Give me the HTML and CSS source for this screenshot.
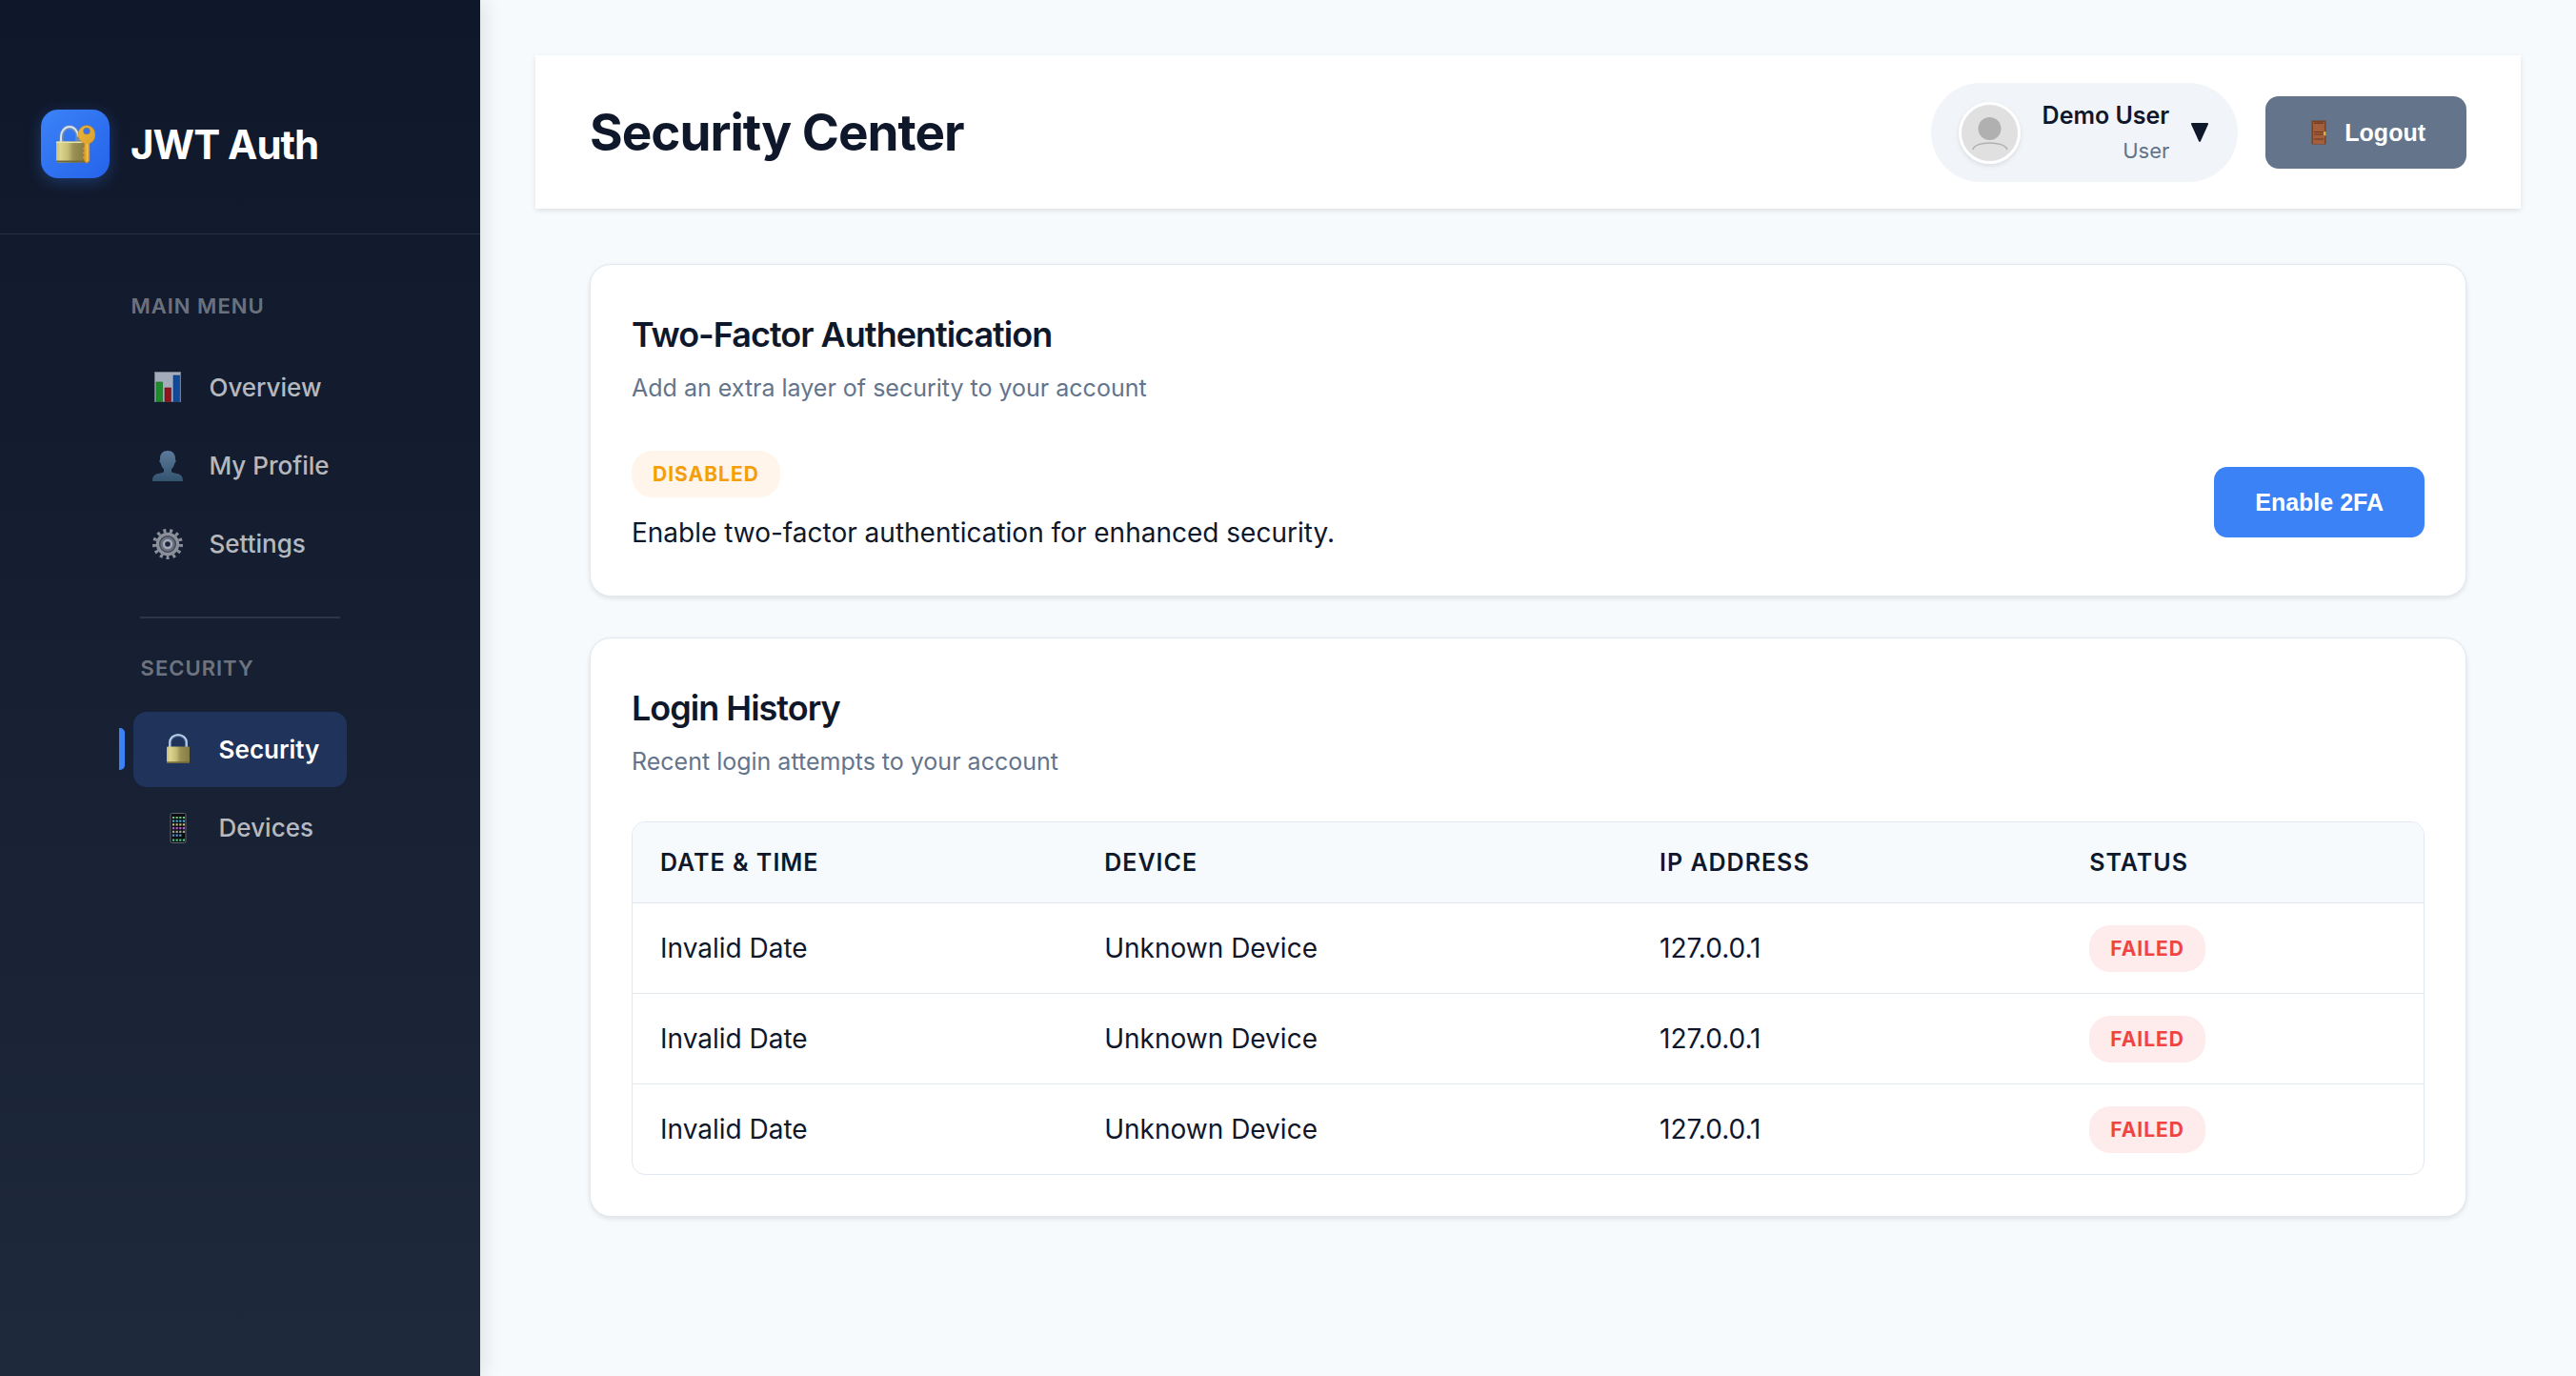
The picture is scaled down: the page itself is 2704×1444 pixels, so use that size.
FILE: index.html
```html
<!DOCTYPE html>
<html lang="en">
<head>
<meta charset="utf-8">
<meta name="viewport" content="width=device-width, initial-scale=1">
<title>Security Center</title>
<link rel="stylesheet" href="styles.css">
</head>
<body>
<div class="app">
  <aside class="sidebar">
    <div class="brand">
      <span class="brand-mark">
        <svg viewBox="0 0 42 42" width="42" height="42" aria-hidden="true">
          <defs>
            <linearGradient id="brass" x1="0" x2="1" y1="0" y2="0">
              <stop offset="0" stop-color="#c9c07a"/><stop offset=".15" stop-color="#ddd58f"/>
              <stop offset=".42" stop-color="#c4bb76"/><stop offset=".6" stop-color="#9a9155"/><stop offset="1" stop-color="#857b45"/>
            </linearGradient>
            <linearGradient id="gold" x1="0" x2="1" y1="0" y2="1">
              <stop offset="0" stop-color="#e8b53c"/><stop offset="1" stop-color="#d9992a"/>
            </linearGradient>
          </defs>
          <path d="M6.500 20V13.500a8.500 10 0 0 1 17 0V20" fill="none" stroke="#6d8bb0" stroke-width="4.500"/>
          <path d="M6 20V13.500a9 10.500 0 0 1 18 0" fill="none" stroke="#d5e3f4" stroke-width="2"/>
          <rect x="1" y="18.500" width="30" height="22" rx="1" fill="url(#brass)"/>
          <path d="M1 39.500h30" stroke="#6f6738" stroke-width="2"/>
          <path d="M1 19.300h30" stroke="#e8e2ac" stroke-width="1.500"/>
          <path fill="url(#gold)" stroke="#b77a1a" stroke-width=".5" fill-rule="evenodd" d="M33 1.500a9 9.500 0 0 0-9 9.700c0 4.600 3 8 6.500 9.400V39l2.500 2.500 3-2.500V20.600c4-1.500 6.200-5 6-9.400a9 9.500 0 0 0-9-9.700zM33 4a3.500 3.500 0 1 1 0 7 3.500 3.500 0 0 1 0-7z"/>
          <path d="M31 24l-2.500 2 2.500 2-2.500 2.500L31 33l-2.500 2 2.500 3z" fill="#d9992a"/>
          <path d="M33.500 21v18" stroke="#f0c860" stroke-width="1.200"/>
        </svg>
      </span>
      <span class="brand-name">JWT Auth</span>
    </div>

    <nav class="nav" aria-label="Main">
      <section class="nav-group">
        <h2 class="nav-title">Main Menu</h2>
        <ul class="nav-list">
          <li><a class="nav-link" href="#overview">
            <svg class="nav-icon" viewBox="0 0 36 36" aria-hidden="true">
              <rect x="4.500" y="1.500" width="27" height="31" fill="#a3acba" stroke="#737a88"/>
              <rect x="6" y="12" width="6.500" height="20.500" fill="#1c8d2c" stroke="#14641f" stroke-width=".6"/>
              <rect x="15" y="18" width="6.500" height="14.500" fill="#8f141c" stroke="#6a0f15" stroke-width=".6"/>
              <rect x="24" y="5" width="6.500" height="27.500" fill="#10489a" stroke="#0c356f" stroke-width=".6"/>
            </svg>
            <span>Overview</span></a></li>
          <li><a class="nav-link" href="#profile">
            <svg class="nav-icon" viewBox="0 0 36 36" aria-hidden="true">
              <defs><linearGradient id="bust" x1="0" x2="0" y1="0" y2="1"><stop offset="0" stop-color="#5c7b9c"/><stop offset="1" stop-color="#34536f"/></linearGradient></defs>
              <path fill="url(#bust)" d="M18 2c5 0 8 3.400 8 8v1.200c1 .4.700 3.200-.6 3.500-.5 2.800-1.600 4.900-3.400 6.500v2.300c0 1.600 2.500 1.900 5.500 2.500 4.200.8 6.500 2.600 6.500 8H2c0-5.400 2.300-7.200 6.500-8 3-.6 5.500-.9 5.500-2.500v-2.300c-1.800-1.600-2.900-3.700-3.400-6.500-1.300-.3-1.600-3.100-.6-3.500V10c0-4.600 3-8 8-8z"/>
            </svg>
            <span>My Profile</span></a></li>
          <li><a class="nav-link" href="#settings">
            <svg class="nav-icon" viewBox="0 0 36 36" aria-hidden="true">
              <circle cx="18" cy="18" r="14" fill="none" stroke="#8a8f9a" stroke-width="4" stroke-dasharray="3 3.767"/>
              <circle cx="18" cy="18" r="10.500" fill="#5b616e" stroke="#8b909b" stroke-width="3.500"/>
              <circle cx="18" cy="18" r="8.300" fill="#687080" stroke="#3f4450" stroke-width="1.200"/>
              <circle cx="18" cy="18" r="4" fill="#1b2436" stroke="#a4abb8" stroke-width="2.400"/>
            </svg>
            <span>Settings</span></a></li>
        </ul>
      </section>

      <section class="nav-group nav-group-split">
        <h2 class="nav-title">Security</h2>
        <ul class="nav-list">
          <li><a class="nav-link nav-link-active" href="#security" aria-current="page">
            <svg class="nav-icon" viewBox="0 0 36 36" aria-hidden="true">
              <path d="M9.500 16v-6a8.500 7.500 0 0 1 17 0v6" fill="none" stroke="#6485ad" stroke-width="3"/>
              <path d="M9 16v-6a9 8 0 0 1 18 0v6" fill="none" stroke="#c3d5ea" stroke-width="1.500"/>
              <rect x="6" y="14.500" width="24" height="17" rx="1" fill="url(#brass)"/>
              <path d="M6 31h24" stroke="#746a38" stroke-width="1.500"/>
            </svg>
            <span>Security</span></a></li>
          <li><a class="nav-link" href="#devices">
            <svg class="nav-icon" viewBox="0 0 36 36" aria-hidden="true">
              <rect x="10" y="2.500" width="16" height="31" rx="1.500" fill="#0b0d12" stroke="#60656d"/>
              <g stroke-width="2.200" stroke-dasharray="2.200 1.400" fill="none">
                <path d="M12 7h13" stroke="#6fc07a"/><path d="M12 10.700h13" stroke="#3fa9d0"/>
                <path d="M12 14.400h13" stroke="#c0b87a"/><path d="M12 18.200h13" stroke="#b060c8"/>
                <path d="M12 21.900h13" stroke="#a0a396"/><path d="M12 25.600h9.500" stroke="#5a96c8"/>
                <path d="M12 30.600h13" stroke="#4fc084"/>
              </g>
            </svg>
            <span>Devices</span></a></li>
        </ul>
      </section>
    </nav>
  </aside>

  <main class="main">
    <header class="topbar">
      <h1 class="page-title">Security Center</h1>
      <div class="topbar-actions">
        <button class="user" type="button" aria-haspopup="menu">
          <span class="avatar">
            <svg viewBox="0 0 59 59" aria-hidden="true">
              <rect width="59" height="59" fill="#e0e0e0"/>
              <circle cx="29.500" cy="25" r="12" fill="#b0b0b0"/>
              <path d="M12 47c2-9.500 33-9.500 36 0" fill="none" stroke="#b0b0b0" stroke-width="1.500"/>
            </svg>
          </span>
          <span class="user-text">
            <span class="user-name">Demo User</span>
            <span class="user-role">User</span>
          </span>
          <svg class="caret" viewBox="0 0 18 20" aria-hidden="true"><path d="M1 0h16q1.500 0 .8 1.800L10 19q-1 1.800-2 0L.2 1.800Q-.5 0 1 0z" fill="#0f172a"/></svg>
        </button>
        <button class="btn btn-muted" type="button">
          <svg class="door" viewBox="0 0 26 26" aria-hidden="true">
            <rect x="5.500" y=".5" width="15" height="25" fill="#7c4023"/>
            <rect x="7" y="2" width="12" height="23" fill="#a35f3c"/>
            <path d="M8 3.200h10M8 12.500h10M8 15h10M8 20h10" stroke="#6b351b" stroke-width="1.200"/>
            <rect x="18" y="12" width="2.500" height="4.500" rx="1" fill="#d8b23e"/>
          </svg>
          <span>Logout</span>
        </button>
      </div>
    </header>

    <div class="content">
      <section class="card">
        <h2 class="card-title">Two-Factor Authentication</h2>
        <p class="card-sub">Add an extra layer of security to your account</p>
        <div class="twofa">
          <div>
            <span class="badge badge-warn">Disabled</span>
            <p class="twofa-text">Enable two-factor authentication for enhanced security.</p>
          </div>
          <button class="btn btn-primary" type="button">Enable 2FA</button>
        </div>
      </section>

      <section class="card">
        <h2 class="card-title">Login History</h2>
        <p class="card-sub">Recent login attempts to your account</p>
        <div class="table-wrap">
          <table class="history">
            <thead>
              <tr><th class="col-date" scope="col">Date &amp; Time</th><th class="col-device" scope="col">Device</th><th class="col-ip" scope="col">IP Address</th><th scope="col">Status</th></tr>
            </thead>
            <tbody>
              <tr><td>Invalid Date</td><td>Unknown Device</td><td>127.0.0.1</td><td><span class="badge badge-fail">Failed</span></td></tr>
              <tr><td>Invalid Date</td><td>Unknown Device</td><td>127.0.0.1</td><td><span class="badge badge-fail">Failed</span></td></tr>
              <tr><td>Invalid Date</td><td>Unknown Device</td><td>127.0.0.1</td><td><span class="badge badge-fail">Failed</span></td></tr>
            </tbody>
          </table>
        </div>
      </section>
    </div>
  </main>
</div>
</body>
</html>
```
FILE: styles.css
```css
*, *::before, *::after { box-sizing: border-box; }

body {
  margin: 0;
  background: #f6fafd;
  color: #0f172a;
  font-family: Inter, "Liberation Sans", sans-serif;
  font-size: 28px;
  line-height: 46px;
}

h1, h2, p, ul { margin: 0; padding: 0; }
ul { list-style: none; }
button { border: 0; cursor: pointer; }

.app { display: flex; min-height: 100vh; }

/* Sidebar */
.sidebar {
  flex: 0 0 504px;
  background: linear-gradient(180deg, #0f172a 0%, #1e293b 100%);
  box-shadow: 4px 0 20px rgba(0, 0, 0, 0.1);
  color: #fff;
}

.brand {
  display: flex;
  align-items: center;
  gap: 22px;
  padding: 115px 43px 58px;
  border-bottom: 1px solid rgba(255, 255, 255, 0.1);
}

.brand-mark {
  display: flex;
  align-items: center;
  justify-content: center;
  width: 72px;
  height: 72px;
  border-radius: 18px;
  background: linear-gradient(135deg, #3b82f6, #2563eb);
  box-shadow: 0 4px 16px rgba(59, 130, 246, 0.3);
}

.brand-name { padding-top: 2px; font-size: 42px; font-weight: 700; letter-spacing: -1px; }

.nav { display: flex; flex-direction: column; align-items: center; padding-top: 58px; }

.nav-title {
  padding: 0 8px;
  color: rgba(255, 255, 255, 0.4);
  font-size: 22px;
  font-weight: 600;
  line-height: 34px;
  letter-spacing: 1px;
  text-transform: uppercase;
}

.nav-list { display: flex; flex-direction: column; gap: 3px; padding-top: 29px; }

.nav-link {
  display: flex;
  align-items: center;
  gap: 25px;
  height: 79px;
  padding: 0 29px;
  border-radius: 14px;
  color: rgba(255, 255, 255, 0.7);
  font-size: 26px;
  font-weight: 500;
  text-decoration: none;
}

.nav-icon { width: 36px; height: 36px; }

.nav-link-active {
  position: relative;
  background: #1f335b;
  color: #fff;
  font-weight: 600;
}

.nav-link-active::before {
  content: "";
  position: absolute;
  left: -15px;
  top: 17px;
  width: 6px;
  height: 44px;
  border-radius: 0 5px 5px 0;
  background: #3b82f6;
}

.nav-group-split { margin-top: 37px; }
.nav-group-split::before {
  content: "";
  display: block;
  height: 2px;
  margin: 0 7px 35px;
  background: rgba(255, 255, 255, 0.1);
}

/* Main column */
.main { flex: 1; min-width: 0; padding: 58px; }

.topbar {
  display: flex;
  align-items: center;
  justify-content: space-between;
  padding: 29px 57px 28px;
  background: #fff;
  box-shadow: 0 2px 5px rgba(0, 0, 0, 0.1);
}

.page-title { font-size: 53px; font-weight: 700; line-height: 70px; letter-spacing: -1px; }

.topbar-actions { display: flex; align-items: center; gap: 29px; }

.user {
  display: flex;
  align-items: center;
  height: 104px;
  padding: 0 31px 0 29px;
  border-radius: 52px;
  background: #f1f5f9;
  color: inherit;
  font-family: inherit;
  text-align: right;
}

.avatar {
  width: 65px;
  height: 65px;
  overflow: hidden;
  border: 3px solid #fff;
  border-radius: 50%;
  box-shadow: 0 2px 5px rgba(0, 0, 0, 0.1);
}
.avatar svg { display: block; }

.user-text { display: flex; flex-direction: column; padding: 0 23px; }
.user-name { font-size: 25px; font-weight: 600; line-height: 38px; }
.user-role { color: #64748b; font-size: 22px; line-height: 36px; }
.caret { width: 18px; height: 20px; }

.btn {
  display: flex;
  align-items: center;
  gap: 14px;
  border-radius: 14px;
  color: #fff;
  font-family: "Liberation Sans", Arial, sans-serif;
  font-size: 25px;
  font-weight: 700;
  line-height: 30px;
}
.btn-muted { padding: 23px 43px; background: #64748b; }
.btn-primary { padding: 22px 43px; background: #3b82f6; }
.door { width: 26px; height: 26px; }

.content { display: flex; flex-direction: column; gap: 43px; padding: 58px 57px 0; }

/* Cards */
.card {
  padding: 43px;
  border: 1px solid #e2e8f0;
  border-radius: 22px;
  background: #fff;
  box-shadow: 0 2px 5px rgba(0, 0, 0, 0.1);
}

.card-title { font-size: 36px; font-weight: 600; line-height: 60px; letter-spacing: -1px; }
.card-sub { padding-top: 6px; color: #64748b; font-size: 25px; line-height: 40px; }

.twofa { display: flex; align-items: center; justify-content: space-between; padding-top: 45px; }
.twofa-text { padding-top: 14px; }

.badge {
  display: inline-block;
  padding: 7px 22px;
  border-radius: 22px;
  font-size: 21px;
  font-weight: 700;
  line-height: 35px;
  letter-spacing: 1px;
  text-transform: uppercase;
}
.badge-warn { background: #fff5ea; color: #f59e0b; }
.badge-fail { background: #feebeb; color: #ef4444; }

/* Login history */
.table-wrap {
  margin-top: 43px;
  overflow: hidden;
  border: 1px solid #e2e8f0;
  border-radius: 14px;
}

.history { width: 100%; border-collapse: collapse; table-layout: fixed; }
.history th, .history td { padding: 22px 29px; text-align: left; }
.history th {
  background: #f6fafd;
  font-size: 25px;
  font-weight: 600;
  line-height: 40px;
  letter-spacing: 1px;
  text-transform: uppercase;
}
.history td { border-top: 1px solid #e2e8f0; }
.col-date { width: 24.8%; }
.col-device { width: 31%; }
.col-ip { width: 24%; }
```
